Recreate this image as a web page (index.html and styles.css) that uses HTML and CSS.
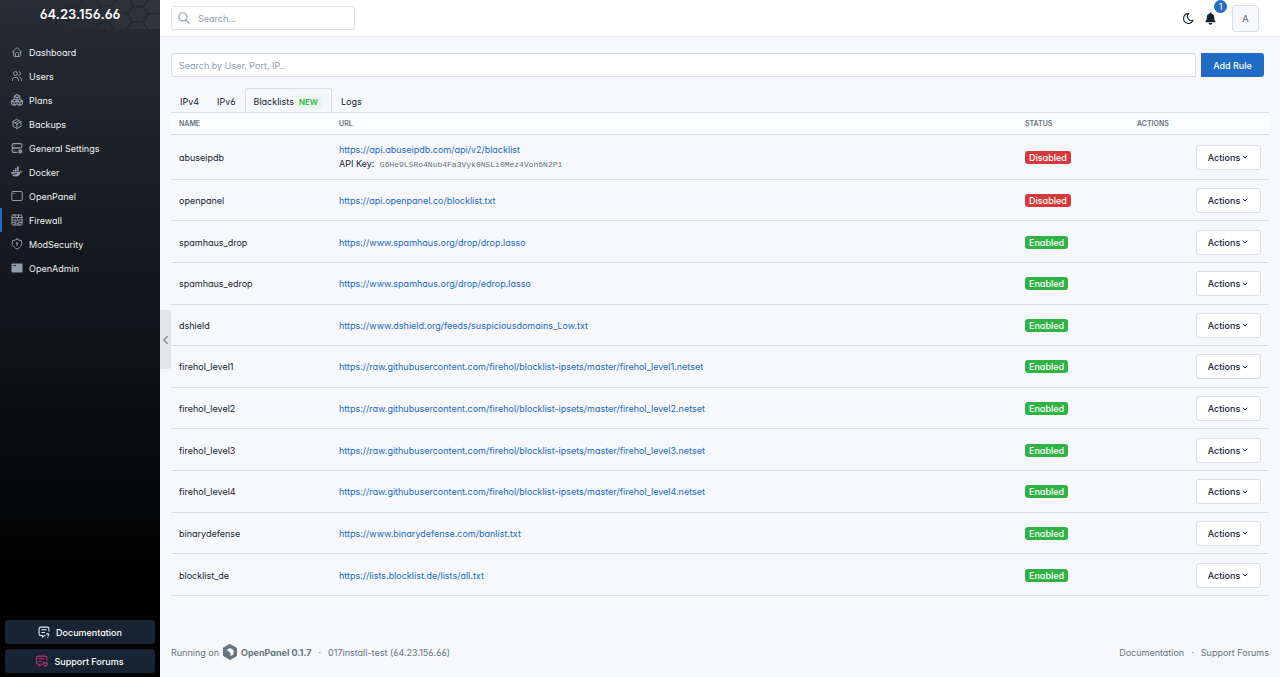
FILE: index.html
```html
<!DOCTYPE html>
<html lang="en">
<head>
  <meta charset="UTF-8">
  <meta name="viewport" content="width=device-width, initial-scale=1">
  <title>Firewall - OpenPanel</title>
  <link rel="stylesheet" href="styles.css">
</head>
<body>
  <aside class="sidebar">
    <div class="brand">
      <svg class="brand-pattern" viewBox="0 0 100 29" preserveAspectRatio="xMaxYMin slice" aria-hidden="true">
        <defs>
          <linearGradient id="fade" x1="0" x2="1">
            <stop offset="0" stop-color="#30373f" stop-opacity="0"/>
            <stop offset="1" stop-color="#30373f"/>
          </linearGradient>
        </defs>
        <rect width="100" height="29" fill="url(#fade)"/>
        <path class="hex" d="M0 12l7-6 11 1 4 8-7 7-11-1zM22 15l12 1 4 7-5 7M38 23l12-1 6-8-5-8-11 0-6 10M18 7l5-8M40 6l-4-7M56 14l11-1 6-7-3-7M51 6l6-7M73 6l10 1 5 7-5 8-11 0-5-9M88 14l12-1M83 7l6-8M72 22l-6 8M50 22l4 8M83 22l5 8M15 22l4 8"/>
      </svg>
      <h1>64.23.156.66</h1>
    </div>
    <nav class="menu">
      <a href="#"><svg class="icon" viewBox="0 0 24 24"><path d="M5 12H3l9-9 9 9h-2M5 12v7a2 2 0 0 0 2 2h10a2 2 0 0 0 2-2v-7M9 21v-6a2 2 0 0 1 2-2h2a2 2 0 0 1 2 2v6"/></svg>Dashboard</a>
      <a href="#"><svg class="icon" viewBox="0 0 24 24"><circle cx="9" cy="7" r="4"/><path d="M3 21v-2a4 4 0 0 1 4-4h4a4 4 0 0 1 4 4v2M16 3.1a4 4 0 0 1 0 7.8M21 21v-2a4 4 0 0 0-3-3.9"/></svg>Users</a>
      <a href="#"><svg class="icon" viewBox="1 1 22 22"><path d="M7 16.5l-5-3 5-3 5 3V19l-5 3-5-3v-5.500M7 16.500V22M7 16.500l5-3M17 16.500l-5-3 5-3 5 3V19l-5 3-5-3M17 16.500V22M17 16.500l5-3M12 8L7 5l5-3 5 3v5.500M12 8v5.500M7 10.500V5M12 8l5-3"/></svg>Plans</a>
      <a href="#"><svg class="icon" viewBox="0 0 24 24"><path d="M12 3l8 4.500v9L12 21l-8-4.500v-9zM12 12l8-4.500M12 12v9M12 12L4 7.500M16 5.200l-8 4.600"/></svg>Backups</a>
      <a href="#"><svg class="icon" viewBox="1 1 22 22"><rect x="3" y="4" width="18" height="8" rx="3"/><path d="M12 20H6a3 3 0 0 1-3-3v-2a3 3 0 0 1 3-3h10.500M7 8v.01M7 16v.01M18 14.500V16M18 20v1.500M21 16.200l-1.300.8M16.300 19l-1.300.8M15 16.200l1.300.8M19.700 19l1.300.8"/><circle cx="18" cy="18" r="2"/></svg>General Settings</a>
      <a href="#"><svg class="icon" viewBox="0 0 24 24"><path class="solid" d="M1 12h16c2 0 2-2 2-4 1 1 1.500 2 1.500 2.500H23c-.5 2-2 2.500-4 2.500-1 5-5 8-10 8-5 0-9-3-8-9z"/><path class="solid" d="M4 8h3.500v3H4zM8 8h3.500v3H8zM12 8h3.500v3H12zM8 4.500h3.500v3H8zM12 1h3.500v6.500H12z"/><path class="cut" d="M3 16.500c3 0 5 0 8-2"/></svg>Docker</a>
      <a href="#"><svg class="icon" viewBox="0 0 24 24"><rect x="1.500" y="3" width="21" height="18" rx="2.500"/><path d="M5 7h.01M8 7h.01"/></svg>OpenPanel</a>
      <a href="#" class="active"><svg class="icon" viewBox="0 0 24 24"><rect x="2" y="2" width="20" height="20" rx="2"/><path d="M2 7h20M2 12h5M17 12h5M2 17h5M17 17h5M8 2v5M15 2v5M12 9c1 3 4 4 4 7a4 4 0 0 1-8 0c0-2 1-3 1-5 2 1 3 2 3 4M8 20v2M16 20v2"/></svg>Firewall</a>
      <a href="#"><svg class="icon" viewBox="0 0 24 24"><path d="M12 2a12 12 0 0 0 9 3c2 8-1 14-9 17C4 19 1 13 3 5a12 12 0 0 0 9-3z"/><circle class="solid" cx="12" cy="10.500" r="2"/><path d="M12 11v4"/></svg>ModSecurity</a>
      <a href="#"><svg class="icon" viewBox="0 0 24 24"><rect class="solid" x="1" y="3" width="22" height="18" rx="2"/><path class="cut" d="M4 7h.01M7 7h2"/></svg>OpenAdmin</a>
    </nav>
    <div class="sidebar-links">
      <a href="#"><svg class="icon light" viewBox="1 1 22 22"><path d="M14 18.500h-1l-4 3v-3H6a3 3 0 0 1-3-3V6a3 3 0 0 1 3-3h12a3 3 0 0 1 3 3v4M8 8h8M8 13h5M19 22v.01M19 19a2 2 0 1 0-2-3"/></svg>Documentation</a>
      <a href="#"><svg class="icon pink" viewBox="1 1 22 22"><path d="M11 19l-4 2v-3H5a3 3 0 0 1-3-3V6a3 3 0 0 1 3-3h13a3 3 0 0 1 3 3v4M7 8h9M7 13h4M18 22l3.500-3.500a2 2 0 0 0-3.500-2.500 2 2 0 0 0-3.500 2.500z"/></svg>Support Forums</a>
    </div>
    <button class="collapse" type="button" aria-label="Toggle sidebar"><svg viewBox="0 0 6 10"><path d="M5 1L1 5l4 4"/></svg></button>
  </aside>

  <div class="page">
    <header class="topbar">
      <label class="search">
        <svg viewBox="0 0 24 24"><circle cx="10" cy="10" r="7"/><path d="M21 21l-6-6"/></svg>
        <input type="text" placeholder="Search…" aria-label="Search">
      </label>
      <div class="tools">
        <button type="button" class="tool" aria-label="Dark mode"><svg viewBox="0 0 24 24"><path d="M12 3h.4a7.500 7.500 0 0 0 7.900 12.400A9 9 0 1 1 12 3z"/></svg></button>
        <button type="button" class="tool bell" aria-label="Notifications"><svg viewBox="0 0 24 24"><path d="M12 1a2 2 0 0 1 2 2.200c3.500.8 5 3.600 5 6.800v4l2.500 4v1h-19v-1L5 14v-4c0-3.200 1.500-6 5-6.800A2 2 0 0 1 12 1zM8.500 20.500h7a3.500 3 0 0 1-7 0z"/></svg><span class="count">1</span></button>
        <button type="button" class="avatar">A</button>
      </div>
    </header>

    <main class="content">
      <form class="rule-form">
        <input type="text" placeholder="Search by User, Port, IP.." aria-label="Search rules">
        <button type="button">Add Rule</button>
      </form>

      <nav class="tabs">
        <a href="#">IPv4</a>
        <a href="#">IPv6</a>
        <a href="#" class="active">Blacklists<span class="new">NEW</span></a>
        <a href="#">Logs</a>
      </nav>

      <div class="table-wrap">
        <table>
          <thead>
            <tr><th class="col-name">Name</th><th>URL</th><th class="col-status">Status</th><th class="col-actions">Actions</th></tr>
          </thead>
          <tbody>
            <tr>
              <td>abuseipdb</td>
              <td><a href="#">https://api.abuseipdb.com/api/v2/blacklist</a><div class="key">API Key: <code>G6He9L5Ro4Nub4Fa3Vyk0N5Li0Mez4Von6N2P1</code></div></td>
              <td><span class="badge off">Disabled</span></td>
              <td><button type="button" class="action">Actions<svg viewBox="0 0 8 6"><path d="M2 2l2 2 2-2"/></svg></button></td>
            </tr>
            <tr>
              <td>openpanel</td>
              <td><a href="#">https://api.openpanel.co/blocklist.txt</a></td>
              <td><span class="badge off">Disabled</span></td>
              <td><button type="button" class="action">Actions<svg viewBox="0 0 8 6"><path d="M2 2l2 2 2-2"/></svg></button></td>
            </tr>
            <tr>
              <td>spamhaus_drop</td>
              <td><a href="#">https://www.spamhaus.org/drop/drop.lasso</a></td>
              <td><span class="badge">Enabled</span></td>
              <td><button type="button" class="action">Actions<svg viewBox="0 0 8 6"><path d="M2 2l2 2 2-2"/></svg></button></td>
            </tr>
            <tr>
              <td>spamhaus_edrop</td>
              <td><a href="#">https://www.spamhaus.org/drop/edrop.lasso</a></td>
              <td><span class="badge">Enabled</span></td>
              <td><button type="button" class="action">Actions<svg viewBox="0 0 8 6"><path d="M2 2l2 2 2-2"/></svg></button></td>
            </tr>
            <tr>
              <td>dshield</td>
              <td><a href="#">https://www.dshield.org/feeds/suspiciousdomains_Low.txt</a></td>
              <td><span class="badge">Enabled</span></td>
              <td><button type="button" class="action">Actions<svg viewBox="0 0 8 6"><path d="M2 2l2 2 2-2"/></svg></button></td>
            </tr>
            <tr>
              <td>firehol_level1</td>
              <td><a href="#">https://raw.githubusercontent.com/firehol/blocklist-ipsets/master/firehol_level1.netset</a></td>
              <td><span class="badge">Enabled</span></td>
              <td><button type="button" class="action">Actions<svg viewBox="0 0 8 6"><path d="M2 2l2 2 2-2"/></svg></button></td>
            </tr>
            <tr>
              <td>firehol_level2</td>
              <td><a href="#">https://raw.githubusercontent.com/firehol/blocklist-ipsets/master/firehol_level2.netset</a></td>
              <td><span class="badge">Enabled</span></td>
              <td><button type="button" class="action">Actions<svg viewBox="0 0 8 6"><path d="M2 2l2 2 2-2"/></svg></button></td>
            </tr>
            <tr>
              <td>firehol_level3</td>
              <td><a href="#">https://raw.githubusercontent.com/firehol/blocklist-ipsets/master/firehol_level3.netset</a></td>
              <td><span class="badge">Enabled</span></td>
              <td><button type="button" class="action">Actions<svg viewBox="0 0 8 6"><path d="M2 2l2 2 2-2"/></svg></button></td>
            </tr>
            <tr>
              <td>firehol_level4</td>
              <td><a href="#">https://raw.githubusercontent.com/firehol/blocklist-ipsets/master/firehol_level4.netset</a></td>
              <td><span class="badge">Enabled</span></td>
              <td><button type="button" class="action">Actions<svg viewBox="0 0 8 6"><path d="M2 2l2 2 2-2"/></svg></button></td>
            </tr>
            <tr>
              <td>binarydefense</td>
              <td><a href="#">https://www.binarydefense.com/banlist.txt</a></td>
              <td><span class="badge">Enabled</span></td>
              <td><button type="button" class="action">Actions<svg viewBox="0 0 8 6"><path d="M2 2l2 2 2-2"/></svg></button></td>
            </tr>
            <tr>
              <td>blocklist_de</td>
              <td><a href="#">https://lists.blocklist.de/lists/all.txt</a></td>
              <td><span class="badge">Enabled</span></td>
              <td><button type="button" class="action">Actions<svg viewBox="0 0 8 6"><path d="M2 2l2 2 2-2"/></svg></button></td>
            </tr>
          </tbody>
        </table>
      </div>
    </main>

    <footer class="footer">
      <div class="running">
        <span>Running on</span>
        <svg class="logo" viewBox="0 0 14 16"><path d="M7 .500l6.500 3.700v7.600L7 15.500.500 11.800V4.200z" fill="#667382" stroke="#667382" stroke-linejoin="round"/><path d="M3.500 6L7 4l3.500 2v4.500L7.500 12V9L6 7.500z" fill="#f6f8fb" stroke="none"/></svg>
        <strong>OpenPanel 0.1.7</strong>
        <span class="dot">·</span>
        <span>017install-test (64.23.156.66)</span>
      </div>
      <div class="footer-links"><a href="#">Documentation</a><span>·</span><a href="#">Support Forums</a></div>
    </footer>
  </div>
</body>
</html>
```
FILE: styles.css
```css
* {
  box-sizing: border-box;
}
body {
  margin: 0;
  display: flex;
  min-height: 100vh;
  background: #f6f8fb;
  color: #182433;
  font-family: Inter, "Liberation Sans", sans-serif;
  font-feature-settings: "cv03", "cv04", "cv11";
  font-size: 9px;
  line-height: 15px;
}
a {
  color: inherit;
  text-decoration: none;
}
button, input {
  font: inherit;
  font-feature-settings: inherit;
  color: inherit;
}
button {
  cursor: pointer;
}
svg {
  display: block;
  flex: none;
  fill: none;
  stroke: currentColor;
  stroke-linecap: round;
  stroke-linejoin: round;
}

/* sidebar */
.sidebar {
  position: relative;
  flex: none;
  display: flex;
  flex-direction: column;
  width: 160px;
  background: linear-gradient(#252c35, #0e1114 55%, #000 86%);
  color: #fff;
}
.brand {
  position: relative;
  height: 29px;
  text-align: center;
}
.brand-pattern {
  position: absolute;
  top: 0;
  right: 0;
  width: 100px;
  height: 29px;
  stroke: none;
}
.brand-pattern .hex {
  stroke: #232a32;
  stroke-width: 2;
}
.brand h1 {
  position: relative;
  margin: 0;
  font-size: 13px;
  font-weight: 600;
  line-height: 29px;
}
.menu {
  flex: 1;
  padding-top: 11px;
}
.menu a {
  display: flex;
  align-items: center;
  gap: 6px;
  height: 24px;
  padding-left: 11px;
  color: #f0f2f4;
}
.menu a.active {
  padding-left: 9px;
  border-left: 2px solid #206bc4;
}
.icon {
  width: 12px;
  height: 12px;
  color: #929dab;
  stroke-width: 2;
}
.icon .solid {
  fill: currentColor;
  stroke: none;
}
.icon .cut {
  stroke: #161b20;
}
.icon.light {
  color: #e4e7ea;
}
.icon.pink {
  color: #c2316a;
}
.sidebar-links {
  display: grid;
  gap: 5px;
  padding: 0 5px 4px;
}
.sidebar-links a {
  display: flex;
  align-items: center;
  justify-content: center;
  gap: 6px;
  height: 24px;
  border-radius: 3px;
  background: #182433;
  font-weight: 500;
}
.collapse {
  position: absolute;
  left: 100%;
  top: 310px;
  width: 11px;
  height: 59px;
  padding: 0 3px;
  border: 0;
  border-radius: 0 3px 3px 0;
  background: #e3e4e6;
  color: #8b8f94;
}
.collapse svg {
  width: 5px;
  height: 8px;
  stroke-width: 2;
}

/* top bar */
.page {
  flex: 1;
  display: flex;
  flex-direction: column;
}
.topbar {
  display: flex;
  align-items: center;
  justify-content: space-between;
  height: 37px;
  padding: 0 21px 0 11px;
  background: #fff;
  border-bottom: 1px solid #e6e9ed;
}
.search {
  display: flex;
  align-items: center;
  gap: 7px;
  width: 184px;
  height: 24px;
  padding: 0 5px;
  border: 1px solid #dadfe5;
  border-radius: 3px;
  color: #929dab;
}
.search svg {
  width: 14px;
  height: 14px;
  stroke-width: 2;
}
.search input {
  flex: 1;
  min-width: 0;
  padding: 0;
  border: 0;
  outline: 0;
  background: none;
}
::placeholder {
  color: #929dab;
  opacity: 1;
}
.tools {
  display: flex;
  align-items: center;
  gap: 9px;
}
.tool {
  position: relative;
  padding: 0;
  border: 0;
  background: none;
}
.tool svg {
  width: 13px;
  height: 13px;
  stroke-width: 2;
}
.bell svg {
  fill: currentColor;
  stroke: none;
}
.count {
  position: absolute;
  left: 10px;
  top: -12px;
  width: 13px;
  border-radius: 7px;
  background: #206bc4;
  color: #fff;
  line-height: 13px;
}
.avatar {
  width: 27px;
  height: 27px;
  margin-left: 6px;
  padding: 0;
  border: 1px solid #dadfe5;
  border-radius: 3px;
  background: #f6f8fb;
  color: #667382;
  font-weight: 500;
}

/* rules */
.content {
  flex: 1;
  display: flex;
  flex-direction: column;
  padding: 16px 11px 0;
}
.rule-form {
  display: flex;
  gap: 5px;
  padding-right: 5px;
}
.rule-form input {
  flex: 1;
  height: 24px;
  padding: 0 7px;
  border: 1px solid #dadfe5;
  border-radius: 3px 0 0 3px;
  background: #fff;
}
.rule-form button {
  width: 63px;
  height: 24px;
  padding: 0;
  border: 0;
  border-radius: 0 3px 3px 0;
  background: #206bc4;
  color: #fff;
  font-weight: 500;
}
.tabs {
  display: flex;
  margin-top: 11px;
}
.tabs a {
  height: 24px;
  padding: 5px 8px;
  border: 1px solid transparent;
  border-bottom: 0;
}
.tabs .active {
  border-color: #dadfe5;
  border-radius: 3px 3px 0 0;
}
.new {
  padding: 2px 5px;
  border-radius: 3px;
  background: #eaf7ec;
  color: #2fb344;
  font-size: 8px;
  font-weight: 600;
}
.table-wrap {
  flex: 1;
  display: grid;
}
table {
  width: 100%;
  height: 100%;
  border-collapse: collapse;
}
th {
  height: 22px;
  padding: 0 8px;
  border-top: 1px solid #dadfe5;
  background: #fcfdfe;
  color: #667382;
  font-size: 7px;
  font-weight: 600;
  text-align: left;
  text-transform: uppercase;
}
td {
  height: 41px;
  padding: 7px 8px 6px;
  border-top: 1px solid #dadfe5;
  border-bottom: 1px solid #dadfe5;
}
td:last-child {
  text-align: right;
}
td a {
  color: #206bc4;
}
.col-name {
  width: 160px;
}
.col-status {
  width: 112px;
}
.col-actions {
  width: 140px;
}
.key {
  line-height: 14px;
}
code {
  margin-left: 3px;
  color: #667382;
  font-family: "Liberation Mono", monospace;
  font-size: 8px;
}
.badge {
  display: inline-block;
  padding: 0 4px;
  border-radius: 3px;
  background: #2fb344;
  color: #fff;
  font-weight: 500;
  line-height: 13px;
}
.badge.off {
  background: #d63939;
}
.action {
  display: inline-flex;
  align-items: center;
  justify-content: center;
  gap: 1px;
  width: 65px;
  height: 25px;
  padding: 0;
  border: 1px solid #dadfe5;
  border-radius: 3px;
  background: #fff;
  font-weight: 500;
  vertical-align: middle;
}
.action svg {
  width: 8px;
  height: 6px;
}

/* footer */
.footer {
  display: flex;
  align-items: center;
  justify-content: space-between;
  padding: 48px 11px 17px;
  color: #667382;
}
.running, .footer-links {
  display: flex;
  align-items: center;
  gap: 4px;
}
.logo {
  width: 14px;
  height: 16px;
}
.dot {
  margin: 0 3px;
}
.footer-links {
  gap: 7px;
}
```
